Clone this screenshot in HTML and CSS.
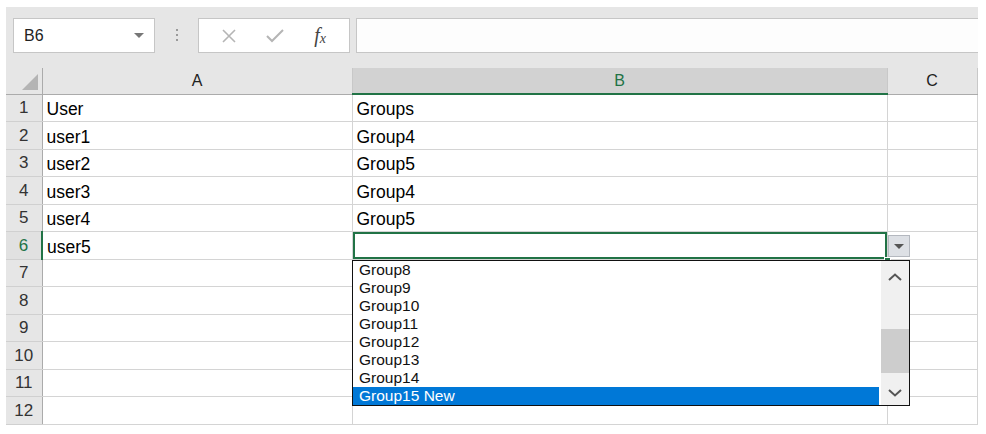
FILE: index.html
```html
<!DOCTYPE html>
<html lang="en">
<head>
    <meta charset="UTF-8">
    <title>Sheet - data validation list</title>
    <link rel="stylesheet" href="styles.css">
</head>
<body>

<div class="app">
    <!-- Name box + formula bar -->
    <div class="toolbar">
        <div class="name-box">
            <span>B6</span>
            <span class="caret"></span>
        </div>
        <div class="grip">
            <i></i><i></i><i></i>
        </div>
        <div class="fx-buttons">
            <svg class="fx-icon" width="14" height="14" viewBox="0 0 14 14">
                <path d="M1 1 L13 13 M13 1 L1 13" stroke="#b5b5b5" stroke-width="1.6" fill="none"/>
            </svg>
            <svg class="fx-icon" width="18" height="14" viewBox="0 0 18 14">
                <path d="M1 7 L6 12 L17 1" stroke="#b5b5b5" stroke-width="2" fill="none"/>
            </svg>
            <span class="fx-label">f<sub>x</sub></span>
        </div>
        <div class="formula-input"></div>
    </div>

    <!-- Grid -->
    <div class="sheet">
        <table class="grid">
            <colgroup>
                <col class="c-head">
                <col class="c-a">
                <col class="c-b">
                <col class="c-c">
            </colgroup>
            <thead>
                <tr>
                    <th class="corner"><span class="tri"></span></th>
                    <th>A</th>
                    <th class="active">B</th>
                    <th>C</th>
                </tr>
            </thead>
            <tbody>
                <tr><th>1</th><td>User</td><td>Groups</td><td></td></tr>
                <tr><th>2</th><td>user1</td><td>Group4</td><td></td></tr>
                <tr><th>3</th><td>user2</td><td>Group5</td><td></td></tr>
                <tr><th>4</th><td>user3</td><td>Group4</td><td></td></tr>
                <tr><th>5</th><td>user4</td><td>Group5</td><td></td></tr>
                <tr><th class="active-row">6</th><td>user5</td><td class="selected"></td><td></td></tr>
                <tr><th>7</th><td></td><td></td><td></td></tr>
                <tr><th>8</th><td></td><td></td><td></td></tr>
                <tr><th>9</th><td></td><td></td><td></td></tr>
                <tr><th>10</th><td></td><td></td><td></td></tr>
                <tr><th>11</th><td></td><td></td><td></td></tr>
                <tr><th>12</th><td></td><td></td><td></td></tr>
            </tbody>
        </table>

        <!-- validation dropdown -->
        <div class="fill-handle"></div>
        <div class="list-button"><span class="caret"></span></div>
        <div class="list-popup">
            <ul class="list-items">
                <li>Group8</li>
                <li>Group9</li>
                <li>Group10</li>
                <li>Group11</li>
                <li>Group12</li>
                <li>Group13</li>
                <li>Group14</li>
                <li class="picked">Group15 New</li>
            </ul>
            <div class="scrollbar">
                <svg class="chev" width="14" height="8" viewBox="0 0 14 8">
                    <path d="M1 7 L7 1.5 L13 7" stroke="#555" stroke-width="2" fill="none"/>
                </svg>
                <div class="thumb"></div>
                <svg class="chev" width="14" height="8" viewBox="0 0 14 8">
                    <path d="M1 1 L7 6.5 L13 1" stroke="#555" stroke-width="2" fill="none"/>
                </svg>
            </div>
        </div>
    </div>
</div>

</body>
</html>
```

FILE: styles.css
```css
body {
    margin: 0;
    background-color: #fff;
    font-family: "Liberation Sans", Arial, sans-serif;
    color: #000;
}
.app {
    width: 972px;
    margin: 7px 0 0 6px;
}

/* toolbar */
.toolbar {
    display: flex;
    align-items: flex-start;
    height: 61px;
    padding: 11px 0 0 7px;
    box-sizing: border-box;
    background-color: #e6e6e6;
}
.name-box {
    display: flex;
    align-items: center;
    justify-content: space-between;
    width: 142px;
    height: 35px;
    padding: 0 10px 0 10px;
    box-sizing: border-box;
    background-color: #fff;
    border: 1px solid #c6c6c6;
    font-size: 16px;
    color: #222;
}
.caret {
    width: 0;
    height: 0;
    border-left: 5px solid transparent;
    border-right: 5px solid transparent;
    border-top: 5px solid #777;
}
.grip {
    display: flex;
    flex-direction: column;
    align-items: center;
    gap: 3px;
    width: 43px;
    padding-top: 11px;
}
.grip i {
    width: 2px;
    height: 2px;
    background-color: #9a9a9a;
}
.fx-buttons {
    display: flex;
    align-items: center;
    justify-content: space-around;
    width: 152px;
    height: 35px;
    padding: 0 8px;
    box-sizing: border-box;
    background-color: #fff;
    border: 1px solid #c6c6c6;
}
.fx-label {
    font-family: "Liberation Serif", "Times New Roman", serif;
    font-style: italic;
    font-size: 20px;
    color: #444;
}
.fx-label sub {
    font-size: 14px;
    vertical-align: -1px;
}
.formula-input {
    flex: 1;
    height: 35px;
    margin-left: 6px;
    background-color: #fdfdfd;
    border: 1px solid #c6c6c6;
    border-right: none;
    box-sizing: border-box;
}

/* grid */
.sheet {
    position: relative;
    width: 971px;
}
.grid {
    width: 971px;
    border-collapse: collapse;
    table-layout: fixed;
}
.c-head { width: 36px; }
.c-a { width: 310px; }
.c-b { width: 535px; }
.c-c { width: 90px; }
.grid thead tr {
    height: 26px;
}
.grid thead th {
    padding: 0;
    background-color: #e6e6e6;
    border-left: 1px solid #c8c8c8;
    border-right: 1px solid #c8c8c8;
    border-bottom: 1px solid #ababab;
    font-weight: normal;
    font-size: 16px;
    line-height: 18px;
    color: #222;
    text-align: center;
}
.grid thead th.active {
    background-color: #d2d2d2;
    color: #217346;
    border-bottom: 2px solid #217346;
}
.grid thead th.corner {
    position: relative;
    border-left: none;
    border-right: 1px solid #ababab;
}
.tri {
    position: absolute;
    right: 4px;
    bottom: 4px;
    width: 0;
    height: 0;
    border-left: 16px solid transparent;
    border-bottom: 16px solid #b4b4b4;
}
.grid tbody tr {
    height: 27.5px;
}
.grid tbody th {
    padding: 0;
    background-color: #e6e6e6;
    border-right: 1px solid #ababab;
    border-bottom: 1px solid #d0d0d0;
    font-weight: normal;
    font-size: 17px;
    line-height: 19px;
    color: #333;
    text-align: center;
}
.grid tbody th.active-row {
    color: #217346;
    background-color: #e1e1e1;
    border-right: 2px solid #217346;
}
.grid td {
    padding: 0 4px 2px;
    border: 1px solid #d4d4d4;
    font-size: 17.5px;
    line-height: 20px;
    vertical-align: bottom;
    white-space: nowrap;
}
.grid td.selected {
    box-shadow: inset 0 0 0 2px #217346;
}

/* data validation list */
.fill-handle {
    position: absolute;
    left: 878px;
    top: 189px;
    width: 5px;
    height: 5px;
    background-color: #217346;
    border: 1px solid #fff;
}
.list-button {
    position: absolute;
    left: 882px;
    top: 167px;
    width: 22px;
    height: 22px;
    display: flex;
    align-items: center;
    justify-content: center;
    box-sizing: border-box;
    background-color: #dde0e5;
    border: 1px solid #b4b8bf;
}
.list-button .caret {
    border-top-color: #555;
}
.list-popup {
    position: absolute;
    left: 346px;
    top: 192px;
    width: 558px;
    height: 146px;
    display: flex;
    box-sizing: border-box;
    background-color: #fff;
    border: 1px solid #111;
}
.list-items {
    flex: 1;
    margin: 0;
    padding: 0;
    list-style: none;
}
.list-items li {
    height: 18px;
    line-height: 18px;
    padding-left: 6px;
    font-size: 15.5px;
    color: #111;
}
.list-items li.picked {
    background-color: #0078d7;
    color: #fff;
}
.scrollbar {
    display: flex;
    flex-direction: column;
    align-items: center;
    justify-content: space-between;
    width: 28px;
    margin-left: 2px;
    padding: 12px 0 8px;
    box-sizing: border-box;
    background-color: #f0f0f0;
    position: relative;
}
.thumb {
    position: absolute;
    left: 0;
    top: 68px;
    width: 28px;
    height: 44px;
    background-color: #cdcdcd;
}
```
